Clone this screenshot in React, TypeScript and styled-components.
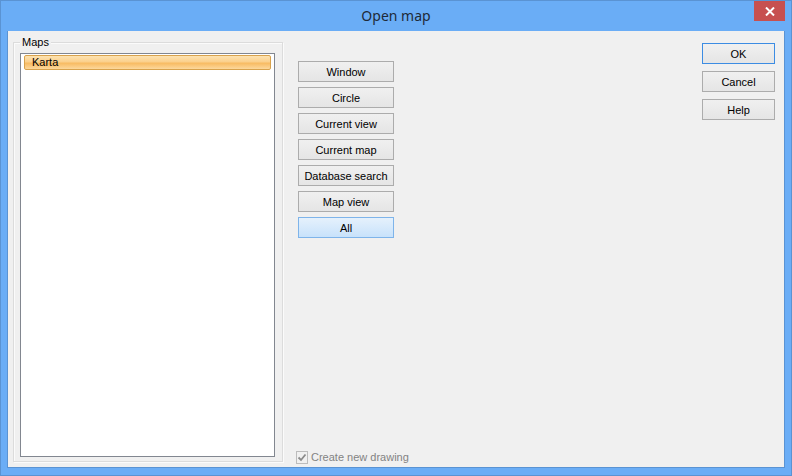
import React from 'react';
import styled, { createGlobalStyle } from 'styled-components';

const GlobalStyle = createGlobalStyle`
    html, body {
        margin: 0;
        padding: 0;
        background: #6aadf6;
    }
    body {
        font-family: Tahoma, "Liberation Sans", Arial, sans-serif;
        font-size: 11px;
    }
`;

const Window = styled.div`
    width: 792px;
    height: 476px;
    box-sizing: border-box;
    border: 1px solid #5a93d3;
    background: #6aadf6;
    display: flex;
    flex-direction: column;
`;

const TitleBar = styled.div`
    height: 30px;
    position: relative;
    display: flex;
    align-items: center;
    justify-content: center;
`;

const Title = styled.span`
    font-family: "Noto Sans", "Open Sans", sans-serif;
    font-size: 14px;
    color: #1e2a38;
    margin-top: -1px;
`;

const CloseButton = styled.div`
    position: absolute;
    top: 0;
    right: 6px;
    width: 31px;
    height: 20px;
    background: #c75050;
    display: flex;
    align-items: center;
    justify-content: center;
`;

const Client = styled.div`
    flex: 1;
    margin: 0 6px 7px 6px;
    background: #f0f0f0;
    border: 1px solid #5a93d3;
    border-top: none;
    display: flex;
    padding: 11px 9px 5px 5px;
    box-sizing: border-box;
`;

const GroupBox = styled.div`
    position: relative;
    width: 270px;
    box-sizing: border-box;
    border: 1px solid #dcdcdc;
    box-shadow: inset 1px 1px 0 #fbfbfb, 1px 1px 0 #fbfbfb;
    padding: 10px 7px 4px 6px;
    display: flex;
`;

const GroupLabel = styled.span`
    position: absolute;
    top: -7px;
    left: 6px;
    padding: 0 2px;
    background: #f0f0f0;
    color: #000;
`;

const ListBox = styled.div`
    flex: 1;
    background: #fff;
    border: 1px solid #828790;
    padding: 1px 3px;
`;

const ListItem = styled.div`
    height: 13px;
    line-height: 13px;
    border: 1px solid #d8a24c;
    border-radius: 2px;
    background: linear-gradient(to bottom, #fde3b2 0%, #fbd08c 45%, #f8bb62 55%, #fcd89c 100%);
    padding-left: 7px;
    color: #000;
`;

const MiddleColumn = styled.div`
    margin-left: 15px;
    padding-top: 19px;
    display: flex;
    flex-direction: column;
    gap: 5px;
    width: 96px;
`;

const Button = styled.div<{ $active?: boolean; $default?: boolean }>`
    height: 21px;
    box-sizing: border-box;
    border: 1px solid ${p => (p.$active ? '#7eb4ea' : p.$default ? '#3c8ce3' : '#acacac')};
    background: ${p =>
        p.$active
            ? 'linear-gradient(to bottom, #e5f1fc, #c8e2fb)'
            : 'linear-gradient(to bottom, #f0f0f0, #e5e5e5)'};
    display: flex;
    align-items: center;
    justify-content: center;
    color: #000;
    white-space: nowrap;
`;

const CheckRow = styled.label`
    margin-top: auto;
    margin-bottom: -2px;
    display: flex;
    align-items: center;
    gap: 3px;
    height: 13px;
    line-height: 13px;
    color: #838383;
    white-space: nowrap;
    margin-left: -2px;
`;

const CheckBox = styled.span`
    width: 11px;
    height: 11px;
    border: 1px solid #bcbcbc;
    background: #f0f0f0;
    display: flex;
    align-items: center;
    justify-content: center;
`;

const RightColumn = styled.div`
    margin-left: auto;
    display: flex;
    flex-direction: column;
    gap: 7px;
    width: 73px;
    padding-top: 1px;
`;

const App: React.FC = () => {
    const tools = ['Window', 'Circle', 'Current view', 'Current map', 'Database search', 'Map view'];

    return (
        <>
            <GlobalStyle />
            <Window>
                <TitleBar>
                    <Title>Open map</Title>
                    <CloseButton>
                        <svg width="10" height="9" viewBox="0 0 10 9">
                            <path d="M1 0.5 L9 8.5 M9 0.5 L1 8.5" stroke="#fff" strokeWidth="2" />
                        </svg>
                    </CloseButton>
                </TitleBar>
                <Client>
                    <GroupBox>
                        <GroupLabel>Maps</GroupLabel>
                        <ListBox>
                            <ListItem>Karta</ListItem>
                        </ListBox>
                    </GroupBox>
                    <MiddleColumn>
                        {tools.map(t => (
                            <Button key={t}>{t}</Button>
                        ))}
                        <Button $active>All</Button>
                        <CheckRow>
                            <CheckBox>
                                <svg width="10" height="9" viewBox="0 0 10 9">
                                    <path d="M1.5 4.5 L4 7 L8.5 1.5" stroke="#8a8a8a" strokeWidth="1.8" fill="none" />
                                </svg>
                            </CheckBox>
                            Create new drawing
                        </CheckRow>
                    </MiddleColumn>
                    <RightColumn>
                        <Button $default>OK</Button>
                        <Button>Cancel</Button>
                        <Button>Help</Button>
                    </RightColumn>
                </Client>
            </Window>
        </>
    );
};

export default App;
